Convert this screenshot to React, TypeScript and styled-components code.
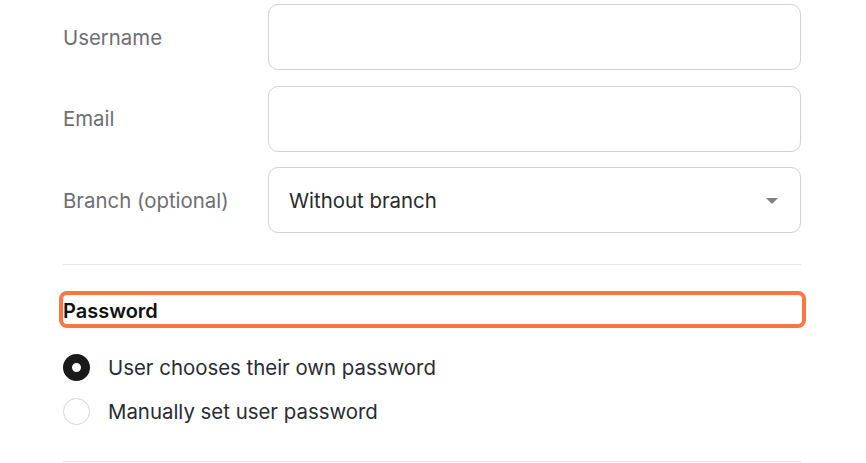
import styled, { createGlobalStyle } from "styled-components";

const GlobalStyle = createGlobalStyle`
    body {
        margin: 0;
        background: #ffffff;
        font-family: Inter, "Noto Sans", sans-serif;
    }
`;

const Form = styled.div`
    display: flex;
    flex-direction: column;
    padding: 4px 65px 0 63px;
    width: 738px;
`;

const Fields = styled.div`
    display: flex;
    flex-direction: column;
    gap: 15.5px;
`;

const Row = styled.div`
    display: grid;
    grid-template-columns: 205px 1fr;
    align-items: center;
`;

const Label = styled.label`
    font-size: 20.4px;
    color: #6e6e73;
`;

const Input = styled.input`
    box-sizing: border-box;
    height: 66px;
    width: 100%;
    border: 1px solid #d2d2d2;
    border-radius: 10px;
    padding: 0 20px;
    font-size: 20px;
    font-family: inherit;
    outline: none;
`;

const SelectBox = styled.div`
    box-sizing: border-box;
    height: 66px;
    display: flex;
    align-items: center;
    justify-content: space-between;
    border: 1px solid #d2d2d2;
    border-radius: 10px;
    padding: 0 22px 0 20px;
    font-size: 20.4px;
    color: #2a2a2a;
`;

const Caret = styled.span`
    width: 0;
    height: 0;
    border-left: 6px solid transparent;
    border-right: 6px solid transparent;
    border-top: 6px solid #808080;
    margin-top: 2px;
`;

const Divider = styled.hr`
    border: none;
    border-top: 1px solid #e6e6e6;
    margin: ${(p: { $top: number }) => p.$top}px 0 0;
`;

const Section = styled.div`
    margin-top: 26px;
    margin-left: -4px;
    margin-right: -5px;
    border: 4px solid #ff7443;
    border-radius: 8px;
    height: 29px;
    display: flex;
    align-items: center;
`;

const SectionTitle = styled.h3`
    margin: 3px 0 0;
    font-size: 20px;
    font-weight: 600;
    color: #111;
`;

const RadioList = styled.div`
    display: flex;
    flex-direction: column;
    gap: 17px;
    margin-top: 26px;
`;

const RadioRow = styled.label`
    display: flex;
    align-items: center;
    gap: 18px;
    font-size: 20.4px;
    color: #2b2b33;
`;

const Radio = styled.span<{ $checked?: boolean }>`
    box-sizing: border-box;
    flex: none;
    width: 27px;
    height: 27px;
    border-radius: 50%;
    border: ${(p) => (p.$checked ? "9px solid #1a1a1a" : "1px solid #d4d4d4")};
    background: #fff;
`;

export default function App() {
    return (
        <>
            <GlobalStyle />
            <Form>
                <Fields>
                    <Row>
                        <Label>Username</Label>
                        <Input />
                    </Row>
                    <Row>
                        <Label>Email</Label>
                        <Input />
                    </Row>
                    <Row>
                        <Label>Branch (optional)</Label>
                        <SelectBox>
                            Without branch
                            <Caret />
                        </SelectBox>
                    </Row>
                </Fields>
                <Divider $top={31} />
                <Section>
                    <SectionTitle>Password</SectionTitle>
                </Section>
                <RadioList>
                    <RadioRow>
                        <Radio $checked />
                        User chooses their own password
                    </RadioRow>
                    <RadioRow>
                        <Radio />
                        Manually set user password
                    </RadioRow>
                </RadioList>
                <Divider $top={36} />
            </Form>
        </>
    );
}
